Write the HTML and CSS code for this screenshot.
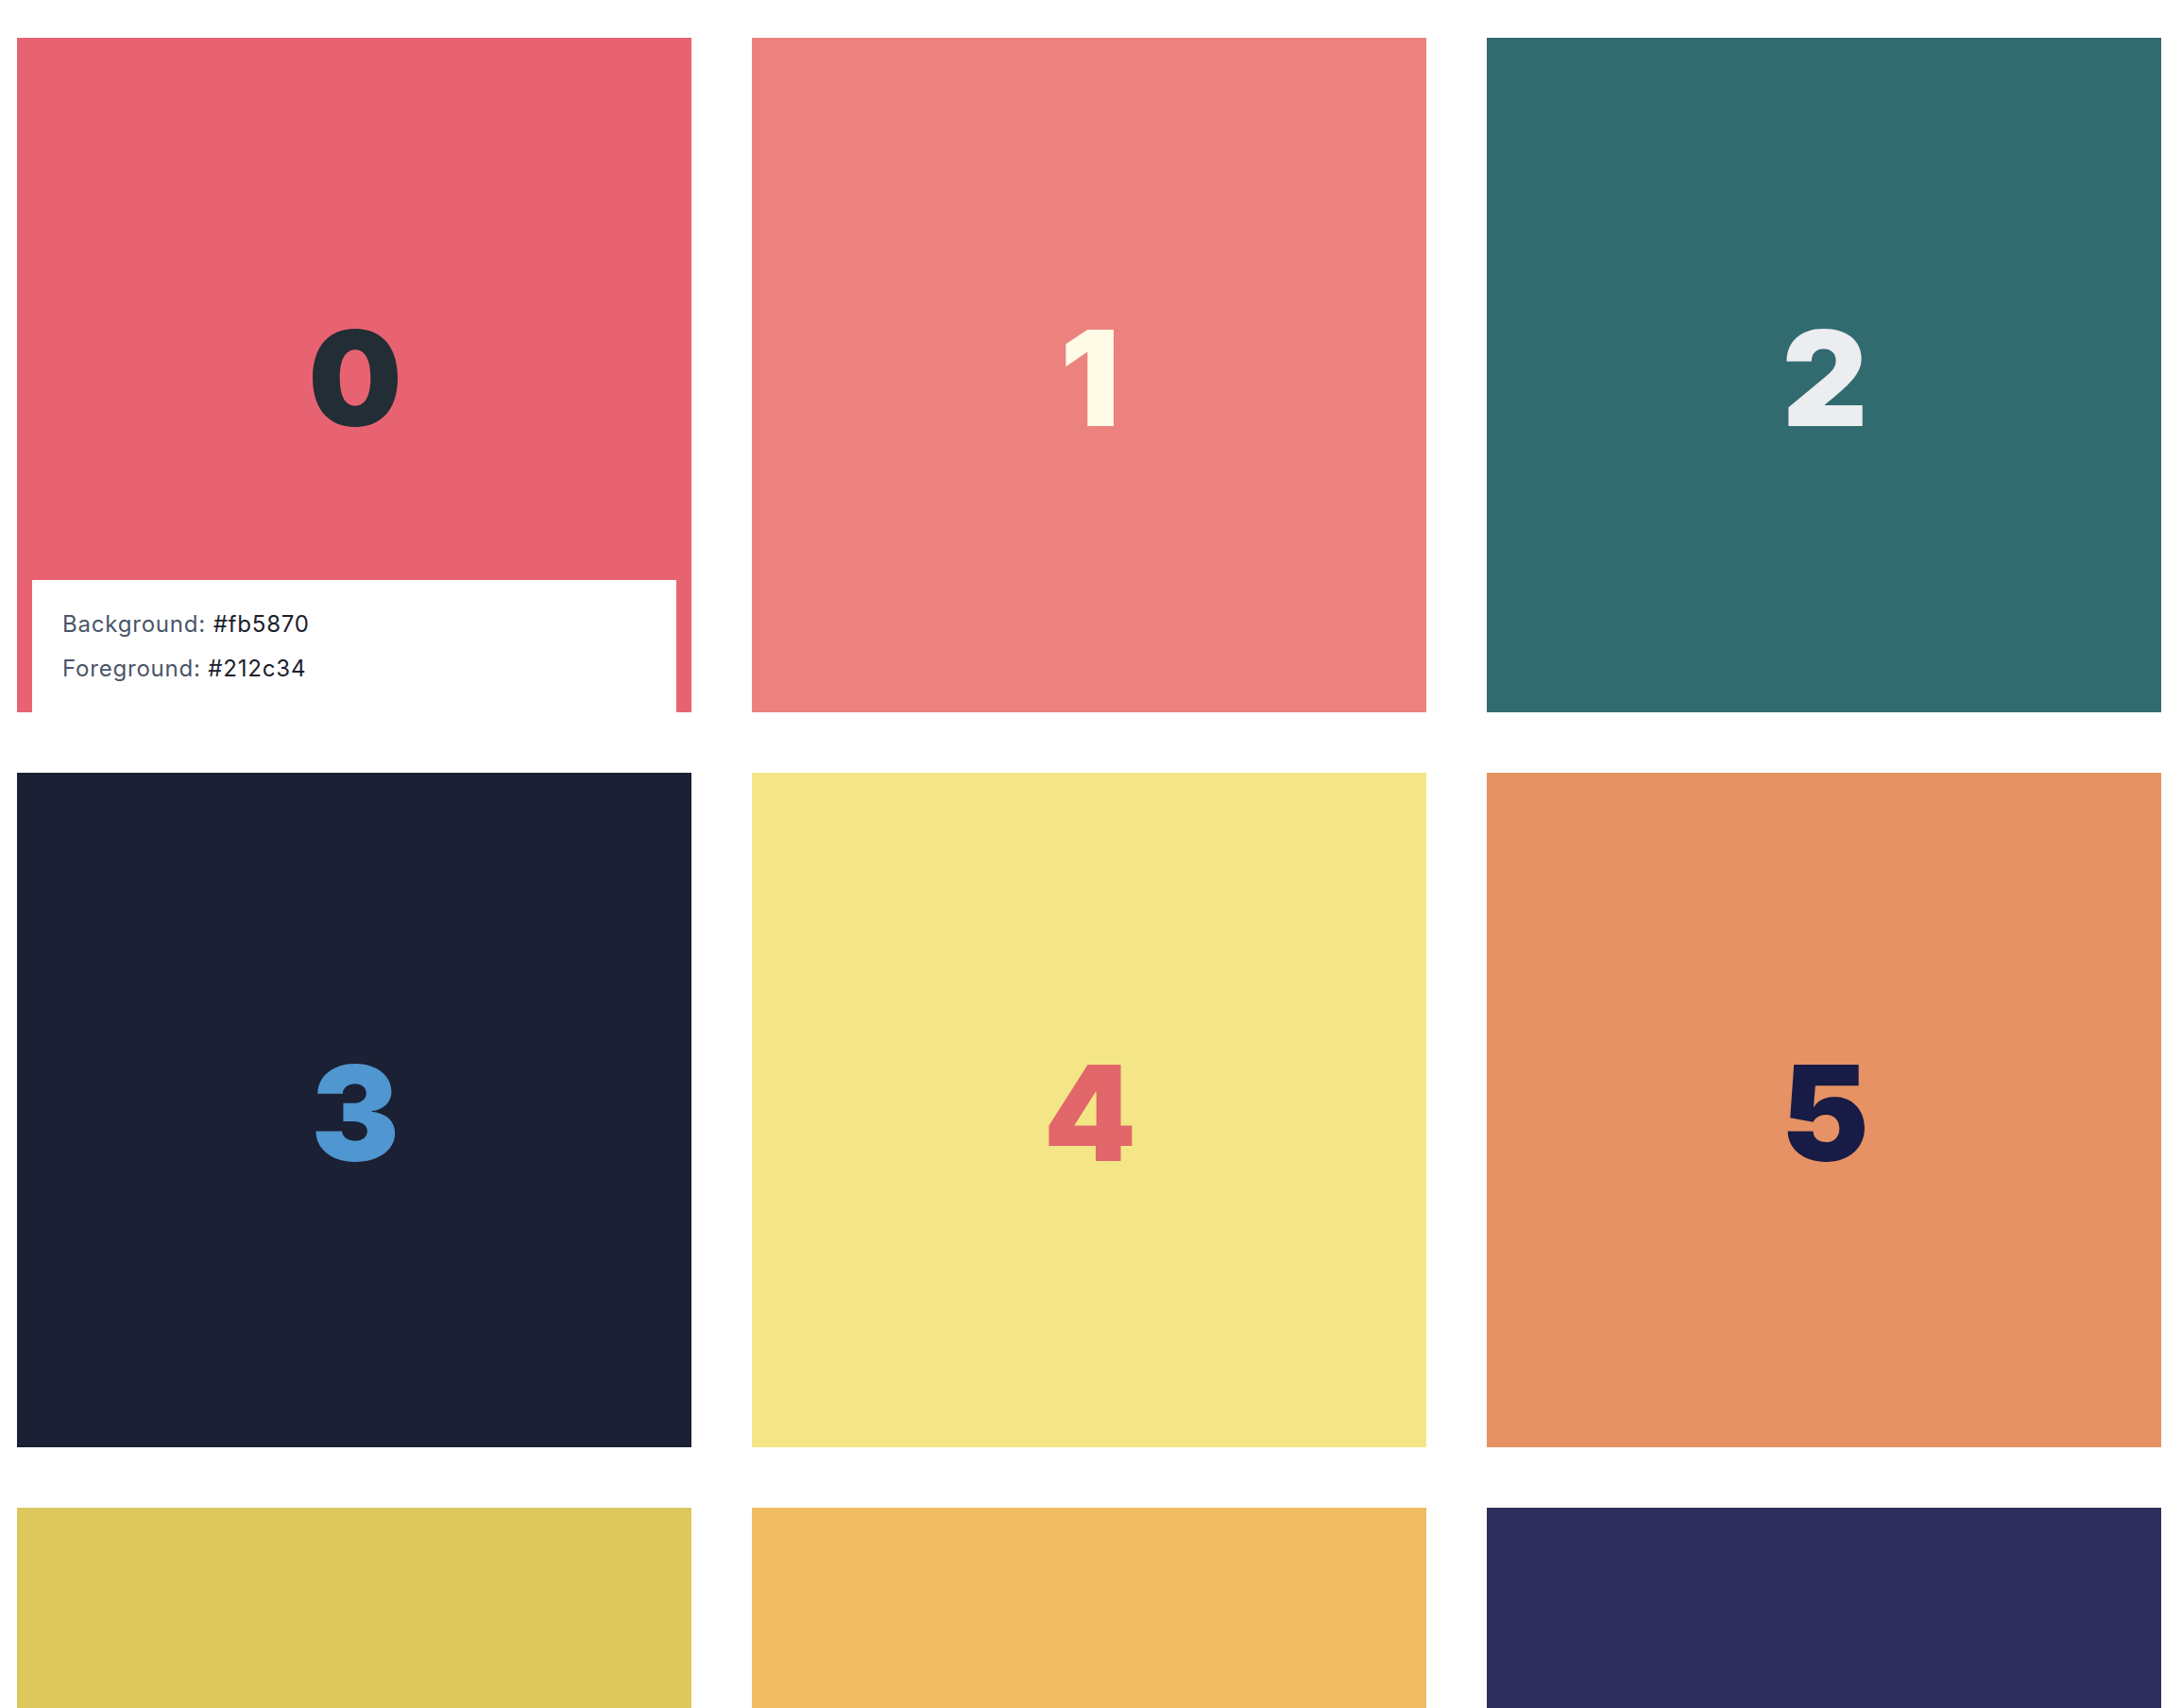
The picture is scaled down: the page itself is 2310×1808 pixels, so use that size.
FILE: index.html
```html
<!DOCTYPE html>
<html lang="en">
<head>
<meta charset="utf-8">
<title>Palette</title>
<link rel="stylesheet" href="styles.css">
</head>
<body>
<main class="grid">
  <div class="tile t0">
    <span class="num">0</span>
    <div class="info">
      <p class="row"><span class="label">Background:</span> <span class="val">#fb5870</span></p>
      <p class="row"><span class="label">Foreground:</span> <span class="val">#212c34</span></p>
    </div>
  </div>
  <div class="tile t1"><span class="num">1</span></div>
  <div class="tile t2"><span class="num">2</span></div>
  <div class="tile t3"><span class="num">3</span></div>
  <div class="tile t4"><span class="num">4</span></div>
  <div class="tile t5"><span class="num">5</span></div>
  <div class="tile t6"><span class="num">6</span></div>
  <div class="tile t7"><span class="num">7</span></div>
  <div class="tile t8"><span class="num">8</span></div>
</main>
</body>
</html>
```
FILE: styles.css
```css
html, body {
  margin: 0;
  padding: 0;
  background: #ffffff;
}
body {
  font-family: Inter, "Noto Sans", "Liberation Sans", sans-serif;
}
.grid {
  display: grid;
  grid-template-columns: repeat(3, 714px);
  grid-auto-rows: 714px;
  gap: 64px;
  padding: 40px 0 40px 18px;
}
.tile {
  position: relative;
  overflow: hidden;
  display: flex;
  align-items: center;
  justify-content: center;
}
.num {
  font-family: Inter, "Noto Sans", sans-serif;
  font-weight: 900;
  font-size: 140px;
  line-height: 1;
  letter-spacing: -2px;
  margin-top: 6px;
}
.info {
  position: absolute;
  left: 16px;
  right: 16px;
  top: 574px;
  height: 300px;
  background: #ffffff;
  box-sizing: border-box;
  padding: 29px 32px;
  display: flex;
  flex-direction: column;
  gap: 11px;
}
.row {
  margin: 0;
  font-size: 24px;
  line-height: 36px;
  letter-spacing: 0.8px;
}
.label { color: #4a5568; }
.val { color: #1a202c; }

.t0 { background: #e86371; color: #232d35; }
.t1 { background: #eb827e; color: #fffbe6; }
.t2 { background: #316b6f; color: #ecedf1; }
.t3 { background: #1b2034; color: #5096d0; }
.t4 { background: #f4e686; color: #e1676b; }
.t5 { background: #e69264; color: #171b45; }
.t6 { background: #ddc85d; color: #2e2f5d; }
.t7 { background: #efbc62; color: #1b2034; }
.t8 { background: #2e2f5d; color: #efbc62; }
```
